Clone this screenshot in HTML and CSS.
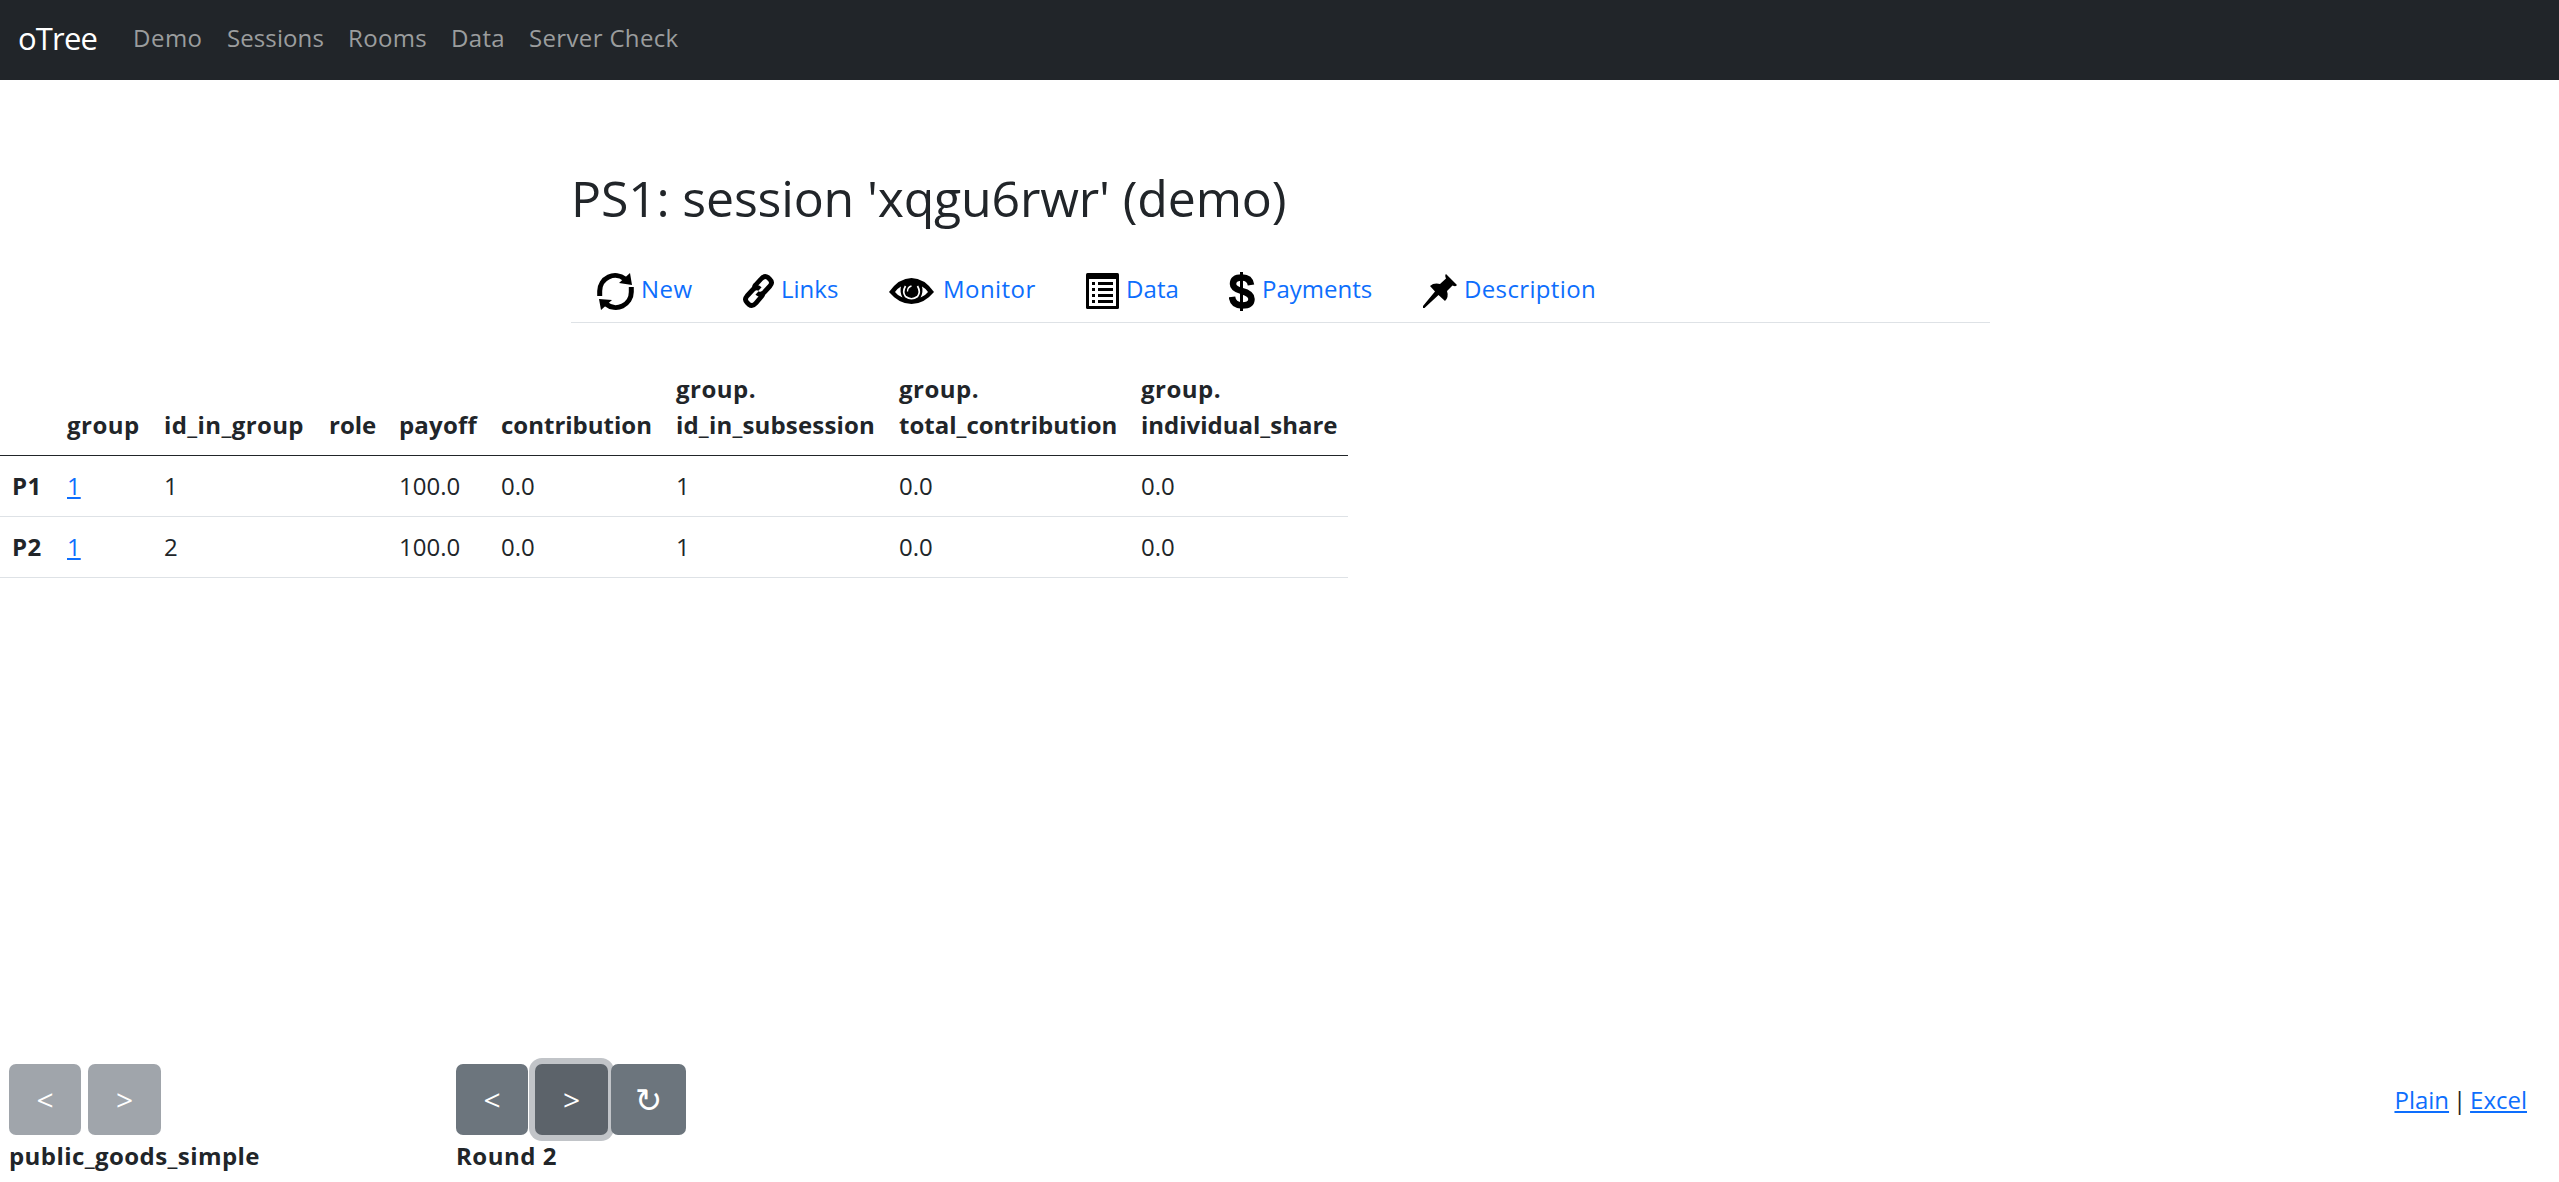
FILE: index.html
```html
<!DOCTYPE html>
<html lang="en">
<head>
<meta charset="utf-8">
<title>PS1: session data</title>
<link rel="stylesheet" href="styles.css">
</head>
<body>
<header class="navbar">
  <a class="brand">oTree</a>
  <nav class="nav-links">
    <a class="w-demo">Demo</a>
    <a class="w-sessions">Sessions</a>
    <a class="w-rooms">Rooms</a>
    <a class="w-data">Data</a>
    <a class="w-check">Server Check</a>
  </nav>
</header>
<main>
  <div class="container">
    <h2>PS1: session 'xqgu6rwr' (demo)</h2>
    <nav class="tabs">
      <a class="tab tab-new"><svg viewBox="0 0 37 37"><g fill="none" stroke="#000" stroke-width="5"><path d="M2.700 23V18A15.500 15.500 0 0 1 28 6"/><path d="M34.300 14V19A15.500 15.500 0 0 1 9 31"/></g><path d="M33 0L35 12L22 10ZM4 37L2 26L15 27Z"/></svg><span>New</span></a>
      <a class="tab tab-links"><svg viewBox="0 0 31 34"><g fill="none" stroke="#000" stroke-width="4.800" stroke-linejoin="round"><path d="M11.500 16Q10.500 13 12.500 11L18 5Q21.500 1 25 3.500L27 5.500Q30 8.500 27 12L21 18.500Q17.500 22 14 19"/><path d="M19.500 17.500Q20.500 20.500 18.500 22.500L13 29Q9.500 33 6 30.500L4 28.500Q1 25.500 4 22L10 15.500Q13.500 12 17 15"/></g></svg><span>Links</span></a>
      <a class="tab tab-monitor"><svg viewBox="0 0 45 26"><path d="M0 14Q10 0 22.500 0T45 14Q35 26 22.500 26T0 14Z"/><path d="M6 14Q9 10 12 8.500Q10.500 14 13.500 19.500Q9 18 6 14ZM39 14Q36 10 33 8.500Q34.500 14 31.500 19.500Q36 18 39 14Z" fill="#fff"/><path d="M16.500 8Q13 14 16.500 18.500Q22.500 23 28.500 18.500Q32 14 28.500 8" fill="none" stroke="#fff" stroke-width="1.700"/><path d="M22.500 8Q18.500 9 18.500 13.500" fill="none" stroke="#fff" stroke-width="1.300"/></svg><span>Monitor</span></a>
      <a class="tab tab-data"><svg viewBox="0 0 33 36"><rect width="33" height="36" rx="1.500"/><path fill="#fff" d="M3 6H30V33H3Z"/><path d="M6 9H9V12H6ZM12 9H27V12H12ZM6 15H9V18H6ZM12 15H27V18H12ZM6 21H9V24H6ZM12 21H27V24H12ZM6 27H9V30H6ZM12 27H27V30H12Z"/></svg><span>Data</span></a>
      <a class="tab tab-payments"><svg viewBox="0 0 26 39"><path d="M11 0H14V39H11Z"/><path d="M22 13Q21 5.500 13 5.500Q4 5.500 4 12Q4 16.500 12.500 19Q22.500 21.500 22.500 27Q22.500 33.500 13 33.500Q4 33.500 3 25" fill="none" stroke="#000" stroke-width="6.500"/></svg><span>Payments</span></a>
      <a class="tab tab-description"><svg viewBox="0 0 34 34"><path d="M23 0L34 11Q33 13 29.500 11.500L24 17Q26 23 22 27L15.500 21L1.500 34H0V32L12 17.500L7 12Q11 8.500 17 10L23 4.500Q21.500 1 23 0Z"/></svg><span>Description</span></a>
    </nav>
  </div>
  <table>
    <colgroup><col class="c-id"><col class="c-group"><col class="c-idgroup"><col class="c-role"><col class="c-payoff"><col class="c-contrib"><col class="c-subsession"><col class="c-total"><col class="c-share"></colgroup>
    <thead>
      <tr>
        <th></th>
        <th class="loose">group</th>
        <th class="medium">id_in_group</th>
        <th>role</th>
        <th class="snug">payoff</th>
        <th>contribution</th>
        <th><span class="loose">group.</span><br><span class="snug">id_in_subsession</span></th>
        <th><span class="loose">group.</span><br>total_contribution</th>
        <th><span class="loose">group.</span><br>individual_share</th>
      </tr>
    </thead>
    <tbody>
      <tr><th class="loose">P1</th><td><a class="link" href="#">1</a></td><td>1</td><td></td><td>100.0</td><td>0.0</td><td>1</td><td>0.0</td><td>0.0</td></tr>
      <tr><th class="loose">P2</th><td><a class="link" href="#">1</a></td><td>2</td><td></td><td>100.0</td><td>0.0</td><td>1</td><td>0.0</td><td>0.0</td></tr>
    </tbody>
  </table>
</main>
<footer>
  <section class="app">
    <div class="buttons"><button class="prev" disabled>&lt;</button><button class="next" disabled>&gt;</button></div>
    <strong>public_goods_simple</strong>
  </section>
  <section class="round">
    <div class="buttons"><button class="prev">&lt;</button><button class="next active">&gt;</button><button class="reload">↻</button></div>
    <strong>Round 2</strong>
  </section>
  <div class="exports"><a class="link" href="#">Plain</a><span class="divider">|</span><a class="link" href="#">Excel</a></div>
</footer>
</body>
</html>
```
FILE: styles.css
```css
* { box-sizing: border-box; }
body {
  margin: 0;
  height: 1182px;
  display: flex;
  flex-direction: column;
  overflow: hidden;
  font: 24px/36px "Open Sans", "Noto Sans", sans-serif;
  color: #212529;
  background: #fff;
}
a { color: #0d6efd; }

.navbar {
  height: 80px;
  background: #212529;
  display: flex;
  align-items: center;
  padding: 0 0 4px 18px;
}
.brand { width: 115px; color: #fff; font-size: 31px; letter-spacing: -.8px; margin-bottom: 1px; }
.nav-links { display: flex; gap: 24px; }
.nav-links a { color: #9b9d9e; white-space: nowrap; }
.w-demo { width: 70px; letter-spacing: .5px; }
.w-sessions { width: 97px; letter-spacing: .1px; }
.w-rooms { width: 79px; letter-spacing: .34px; }
.w-data { width: 54px; letter-spacing: .32px; }
.w-check { letter-spacing: .35px; }

main { flex: 1; }
.container { padding-top: 85px; margin-left: 571px; width: 1419px; }
h2 { margin: 0; font-size: 50px; line-height: 66px; font-weight: 400; letter-spacing: -.17px; }
.tabs {
  display: flex;
  height: 92px;
  padding: 29px 0 0 26px;
  border-bottom: 1px solid #dee2e6;
}
.tab { display: flex; align-items: center; height: 62px; gap: 7px; white-space: nowrap; }
.tab svg { flex: none; }
.tab span { margin-bottom: 4px; }
.tab-new { width: 146px; letter-spacing: .5px; }
.tab-new svg { width: 37px; height: 37px; }
.tab-links { width: 146px; }
.tab-links svg { width: 31px; height: 34px; }
.tab-monitor { width: 197px; gap: 9px; letter-spacing: .45px; }
.tab-monitor svg { width: 45px; height: 26px; }
.tab-data { width: 143px; letter-spacing: .1px; }
.tab-data svg { width: 33px; height: 36px; }
.tab-payments { width: 194px; }
.tab-payments svg { width: 26px; height: 39px; }
.tab-description { letter-spacing: .35px; }
.tab-description svg { width: 34px; height: 34px; }

table {
  border-collapse: separate;
  border-spacing: 0;
  table-layout: fixed;
  width: 1348px;
  margin-top: 36px;
}
.c-id { width: 55px; }
.c-group { width: 97px; }
.c-idgroup { width: 165px; }
.c-role { width: 70px; }
.c-payoff { width: 102px; }
.c-contrib { width: 175px; }
.c-subsession { width: 223px; }
.c-total { width: 242px; }
.c-share { width: 219px; }
th, td {
  text-align: left;
  vertical-align: bottom;
  padding: 12px;
  border-bottom: 1px solid #dee2e6;
  white-space: nowrap;
}
thead th { border-bottom-color: #212529; }
.loose { letter-spacing: .5px; }
.medium { letter-spacing: .39px; }
.snug { letter-spacing: .18px; }
.link { text-decoration: underline; text-decoration-thickness: 2px; text-underline-offset: 2px; text-decoration-skip-ink: none; }

footer { display: flex; height: 118px; padding: 0 32px 0 9px; }
.app { width: 447px; }
.app strong { letter-spacing: .43px; }
.round strong { letter-spacing: .5px; }
.buttons { display: flex; margin-bottom: 3px; }
button {
  height: 71px;
  padding: 0;
  border: 0;
  border-radius: 7px;
  background: #6c757d;
  color: #fff;
  font: 30px/45px "Open Sans", "DejaVu Sans", sans-serif;
}
button:disabled { background: #a0a5ab; }
.prev { width: 72px; margin-right: 7px; }
.next { width: 73px; }
.active { background: #5c636a; box-shadow: 0 0 0 6px #c1c4c8; }
.reload { width: 75px; margin-left: 3px; position: relative; font-size: 33px; }
.exports { margin: 18px 0 0 auto; }
.divider { display: inline-block; width: 21px; text-align: center; color: #212529; }
```
